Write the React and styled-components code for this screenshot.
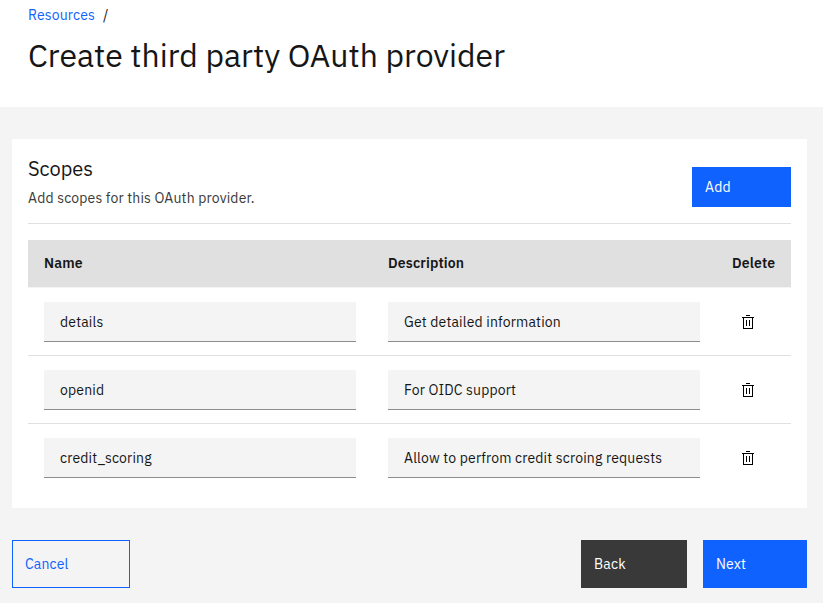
import React from "react";
import styled, { createGlobalStyle } from "styled-components";

const Global = createGlobalStyle`
  * { box-sizing: border-box; }
  body { margin: 0; background: #f4f4f4; color: #161616; font-family: "IBM Plex Sans", "Inter", "Liberation Sans", sans-serif; font-size: 14px; letter-spacing: 0.16px; overflow: hidden; }
`;

const Header = styled.header`
  height: 107px;
  padding: 6px 28px 0;
  background: #fff;
`;
const Breadcrumb = styled.nav`
  display: flex;
  gap: 8px;
  height: 18px;
  line-height: 18px;
  white-space: nowrap;
`;
const Link = styled.a`
  color: #0f62fe;
`;
const Title = styled.h1`
  margin: 11px 0 0;
  font-size: 32px;
  line-height: 40px;
  font-weight: 400;
  letter-spacing: 0;
  white-space: nowrap;
`;
const Panel = styled.section`
  width: 795px;
  height: 369px;
  margin: 32px 0 0 12px;
  padding: 16px 16px 0;
  background: #fff;
`;
const PanelHead = styled.div`
  display: flex;
  justify-content: space-between;
  height: 69px;
  border-bottom: 1px solid #e0e0e0;
`;
const PanelTitle = styled.h2`
  margin: 0;
  font-size: 20px;
  line-height: 28px;
  font-weight: 400;
  letter-spacing: 0;
`;
const Hint = styled.p`
  margin: 5px 0 0;
  line-height: 20px;
  color: #393939;
`;
const Button = styled.button`
  width: ${(p) => p.$w}px;
  height: ${(p) => p.$h || 48}px;
  margin-top: ${(p) => p.$top || 0}px;
  padding: 0 12px;
  border: 1px solid ${(p) => p.$border || p.$bg};
  background: ${(p) => p.$bg};
  color: ${(p) => p.$color || "#fff"};
  font: inherit;
  letter-spacing: inherit;
  text-align: left;
`;
const Row = styled.div`
  display: grid;
  grid-template-columns: 312px 312px 1fr;
  column-gap: 32px;
  height: 68px;
  padding: 14px 16px 0;
  border-bottom: ${(p) => (p.$last ? "0" : "1px solid #e0e0e0")};
`;
const HeadRow = styled(Row)`
  height: 48px;
  margin-top: 16px;
  padding-top: 0;
  padding-bottom: 1px;
  align-items: center;
  background: #e0e0e0;
  border-bottom: 1px solid #f4f4f4;
  font-weight: 600;
  line-height: 18px;
`;
const Field = styled.div`
  height: 40px;
  padding: 0 16px;
  line-height: 40px;
  white-space: nowrap;
  background: #f4f4f4;
  border-bottom: 1px solid #8d8d8d;
`;
const IconCell = styled.div`
  height: 40px;
  padding: 12px 0 0 8px;
`;
const TrashSvg = styled.svg`
  display: block;
`;
const Footer = styled.footer`
  display: flex;
  justify-content: space-between;
  width: 795px;
  margin: 32px 0 0 12px;
`;
const Actions = styled.div`
  display: flex;
  gap: 16px;
`;

const Trash = () => (
  <TrashSvg width="16" height="16" viewBox="0 0 16 16" fill="#000" shapeRendering="crispEdges">
    <path d="M6 1h4v1H6zM2 3h12v1H2zM6 6h1v6H6zM9 6h1v6H9z" />
    <path d="M3 4h1v10h8V4h1v11H3z" />
  </TrashSvg>
);

const scopes = [
  ["details", "Get detailed information"],
  ["openid", "For OIDC support"],
  ["credit_scoring", "Allow to perfrom credit scroing requests"],
];

export default function App() {
  return (
    <>
      <Global />
      <Header>
        <Breadcrumb><Link>Resources</Link><span>/</span></Breadcrumb>
        <Title>Create third party OAuth provider</Title>
      </Header>
      <Panel>
        <PanelHead>
          <div>
            <PanelTitle>Scopes</PanelTitle>
            <Hint>Add scopes for this OAuth provider.</Hint>
          </div>
          <Button $w={99} $h={40} $top={12} $bg="#0f62fe">Add</Button>
        </PanelHead>
        <HeadRow><span>Name</span><span>Description</span><span>Delete</span></HeadRow>
        {scopes.map(([name, text], i) => (
          <Row key={name} $last={i === scopes.length - 1}>
            <Field>{name}</Field>
            <Field>{text}</Field>
            <IconCell><Trash /></IconCell>
          </Row>
        ))}
      </Panel>
      <Footer>
        <Button $w={118} $bg="transparent" $border="#0f62fe" $color="#0f62fe">Cancel</Button>
        <Actions>
          <Button $w={106} $bg="#393939">Back</Button>
          <Button $w={104} $bg="#0f62fe">Next</Button>
        </Actions>
      </Footer>
    </>
  );
}
